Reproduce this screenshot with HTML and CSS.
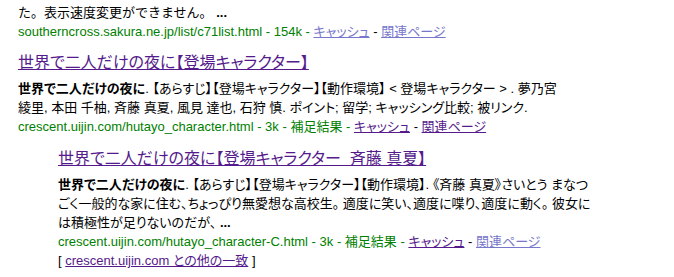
FILE: index.html
```html
<!DOCTYPE html>
<html lang="ja">
<head>
    <meta charset="UTF-8">
    <title>世界で二人だけの夜に - 検索結果</title>
    <link rel="stylesheet" href="styles.css">
</head>
<body>

<div class="results">
    <!-- 前の結果の続き -->
    <div class="tail">
        <div class="snippet">た。表示速度変更ができません。 <b>...</b></div>
        <div class="meta">
            <span class="url">southerncross.sakura.ne.jp/list/c71list.html - 154k - </span>
            <a href="#" class="light">キャッシュ</a> - <a href="#" class="light">関連ページ</a>
        </div>
    </div>

    <div class="result">
        <a href="#" class="title">世界で二人だけの夜に【登場キャラクター】</a>
        <div class="snippet">
            <b>世界で二人だけの夜に</b>. 【あらすじ】【登場キャラクター】【動作環境】 &lt; 登場キャラクター &gt; . 夢乃宮<br>
            綾里, 本田 千柚, 斉藤 真夏, 風見 達也, 石狩 慎. ポイント; 留学; キャッシング比較; 被リンク.
        </div>
        <div class="meta">
            <span class="url">crescent.uijin.com/hutayo_character.html - 3k - 補足結果 - </span>
            <a href="#" class="visited">キャッシュ</a> - <a href="#" class="visited">関連ページ</a>
        </div>
    </div>

    <div class="result indent">
        <a href="#" class="title">世界で二人だけの夜に【登場キャラクター&nbsp; 斉藤 真夏】</a>
        <div class="snippet">
            <b>世界で二人だけの夜に</b>. 【あらすじ】【登場キャラクター】【動作環境】. 《斉藤 真夏》さいとう まなつ<br>
            ごく一般的な家に住む、ちょっぴり無愛想な高校生。 適度に笑い、適度に喋り、適度に動く。 彼女に<br>
            は積極性が足りないのだが、 <b>...</b>
        </div>
        <div class="meta">
            <span class="url">crescent.uijin.com/hutayo_character-C.html - 3k - 補足結果 - </span>
            <a href="#" class="visited">キャッシュ</a> - <a href="#" class="light">関連ページ</a>
        </div>
        <div class="more">[ <a href="#" class="visited">crescent.uijin.com との他の一致</a> ]</div>
    </div>
</div>

</body>
</html>
```

FILE: styles.css
```css
* {
    margin: 0;
    padding: 0;
    box-sizing: border-box;
}

body {
    font-family: 'Liberation Sans', 'Noto Sans CJK JP', sans-serif;
    font-size: 13px;
    line-height: 19px;
    color: #000;
    background-color: #fff;
    font-feature-settings: "palt";
}

.results {
    padding: 3px 0 0 18px;
}

.snippet {
    white-space: nowrap;
}

.tail .snippet {
    font-feature-settings: normal;
}

.url {
    color: #008000;
}

a {
    text-decoration: underline;
}

a.light {
    color: #7777cc;
}

a.visited {
    color: #551a8b;
}

/* 結果ブロック */
.result {
    margin-top: 11px;
}

.result + .result {
    margin-top: 12px;
}

.result .title {
    display: inline-block;
    font-size: 16px;
    line-height: 22px;
    color: #551a8b;
    margin-bottom: 5px;
}

.indent {
    padding-left: 40px;
}
```
